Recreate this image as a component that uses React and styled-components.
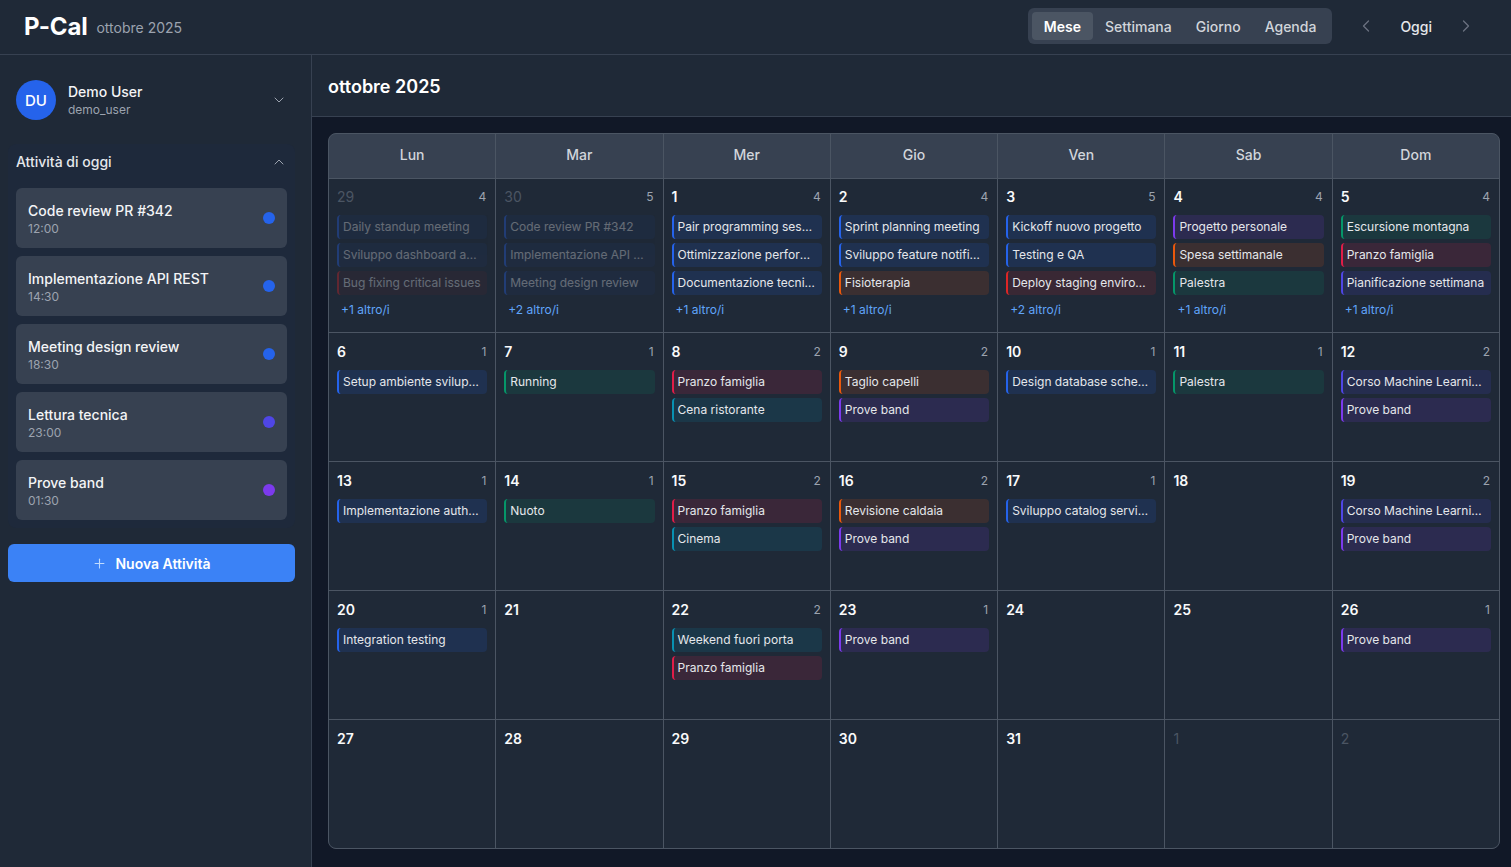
import React from "react";
import styled, { createGlobalStyle } from "styled-components";
import { ChevronDown, ChevronUp, ChevronLeft, ChevronRight, Plus } from "lucide-react";

const GlobalStyle = createGlobalStyle`
  * { box-sizing: border-box; }
  html, body { margin: 0; padding: 0; }
  body {
    font-family: Inter, "Noto Sans", sans-serif;
    background: #111827;
    color: #f3f4f6;
  }
`;

const COLORS = {
  blue: "#2563eb",
  red: "#dc2626",
  orange: "#ea580c",
  green: "#059669",
  purple: "#7c3aed",
  rose: "#e11d48",
  cyan: "#0891b2",
  indigo: "#4f46e5",
};

const Page = styled.div`
  width: 1511px;
  height: 867px;
  display: flex;
  flex-direction: column;
  overflow: hidden;
`;

const TopBar = styled.header`
  height: 55px;
  flex-shrink: 0;
  display: flex;
  align-items: center;
  justify-content: space-between;
  padding: 0 29px 2px 24px;
  background: #1f2937;
  border-bottom: 1px solid #374151;
`;

const Brand = styled.div`
  display: flex;
  align-items: center;
  gap: 9px;
`;

const Logo = styled.span`
  font-size: 24px;
  font-weight: 700;
  color: #ffffff;
  letter-spacing: -0.2px;
`;

const BrandSub = styled.span`
  font-size: 14px;
  color: #9ca3af;
  padding-top: 2px;
`;

const TopRight = styled.div`
  display: flex;
  align-items: center;
`;

const ViewSwitch = styled.div`
  display: flex;
  padding: 4px;
  background: #374151;
  border-radius: 6px;
  margin-right: 18px;
`;

const ViewButton = styled.button`
  border: none;
  font-family: inherit;
  font-size: 14px;
  font-weight: ${(p) => (p.$active ? 600 : 500)};
  color: ${(p) => (p.$active ? "#ffffff" : "#d1d5db")};
  background: ${(p) => (p.$active ? "#4b5563" : "transparent")};
  border-radius: 4px;
  height: 28px;
  padding: 0 12px;
`;

const NavButton = styled.button`
  border: none;
  background: transparent;
  color: #6b7280;
  display: flex;
  align-items: center;
  justify-content: center;
  width: 32px;
  height: 28px;
  padding: 0;
`;

const TodayButton = styled.button`
  border: none;
  background: transparent;
  font-family: inherit;
  font-size: 14px;
  font-weight: 500;
  color: #e5e7eb;
  padding: 0 18px;
`;

const Body = styled.div`
  flex: 1;
  display: flex;
  min-height: 0;
`;

const Sidebar = styled.aside`
  width: 312px;
  flex-shrink: 0;
  background: #1f2937;
  border-right: 1px solid #374151;
  padding: 0 16px 0 8px;
  display: flex;
  flex-direction: column;
`;

const UserBlock = styled.div`
  display: flex;
  align-items: center;
  padding: 25px 8px 16px;
  gap: 12px;
`;

const Avatar = styled.div`
  width: 40px;
  height: 40px;
  border-radius: 50%;
  background: #2563eb;
  color: #ffffff;
  font-size: 15px;
  font-weight: 500;
  display: flex;
  align-items: center;
  justify-content: center;
`;

const UserInfo = styled.div`
  flex: 1;
  display: flex;
  flex-direction: column;
`;

const UserName = styled.span`
  font-size: 14px;
  font-weight: 500;
  line-height: 20px;
  color: #f3f4f6;
`;

const UserHandle = styled.span`
  font-size: 12px;
  line-height: 16px;
  color: #9ca3af;
`;

const IconWrap = styled.span`
  display: flex;
  color: #9ca3af;
`;

const TodayPanel = styled.section`
  margin-top: 8px;
  background: #1e293b;
  border-radius: 8px;
  padding: 0 8px 8px;
`;

const PanelHeader = styled.div`
  display: flex;
  align-items: center;
  justify-content: space-between;
  height: 36px;
  margin: 0 0 8px;
  padding: 0 0 1px 0;
`;

const PanelTitle = styled.span`
  font-size: 14px;
  font-weight: 500;
  color: #e5e7eb;
`;

const TaskList = styled.div`
  display: flex;
  flex-direction: column;
  gap: 8px;
`;

const TaskCard = styled.div`
  height: 60px;
  background: #374151;
  border-radius: 6px;
  padding: 0 12px;
  display: flex;
  align-items: center;
  justify-content: space-between;
`;

const TaskText = styled.div`
  display: flex;
  flex-direction: column;
  padding-top: 1px;
`;

const TaskTitle = styled.span`
  font-size: 14px;
  font-weight: 500;
  line-height: 20px;
  color: #f3f4f6;
`;

const TaskTime = styled.span`
  font-size: 12px;
  line-height: 16px;
  color: #9ca3af;
`;

const Dot = styled.span`
  width: 12px;
  height: 12px;
  border-radius: 50%;
  background: ${(p) => p.$color};
`;

const NewButton = styled.button`
  margin-top: 16px;
  height: 38px;
  border: none;
  border-radius: 6px;
  background: #3b82f6;
  color: #ffffff;
  font-family: inherit;
  font-size: 14px;
  font-weight: 600;
  display: flex;
  align-items: center;
  justify-content: center;
  gap: 8px;
  padding-bottom: 1px;
`;

const Main = styled.main`
  flex: 1;
  display: flex;
  flex-direction: column;
  min-width: 0;
`;

const MainHeader = styled.div`
  height: 62px;
  flex-shrink: 0;
  display: flex;
  align-items: center;
  padding: 2px 16px 0;
  background: #1f2937;
  border-bottom: 1px solid #374151;
`;

const MainTitle = styled.h2`
  margin: 0;
  font-size: 18px;
  font-weight: 600;
  color: #ffffff;
`;

const CalendarArea = styled.div`
  flex: 1;
  padding: 16px 11px 18px 16px;
  background: #111827;
  min-height: 0;
`;

const Calendar = styled.div`
  display: grid;
  grid-template-columns: repeat(7, 1fr);
  grid-template-rows: 44px repeat(5, auto);
  gap: 1px;
  background: #4b5563;
  border: 1px solid #4b5563;
  border-radius: 8px;
  overflow: hidden;
  height: 100%;
`;

const DayHead = styled.div`
  background: #374151;
  display: flex;
  align-items: center;
  justify-content: center;
  padding-bottom: 3px;
  font-size: 14px;
  font-weight: 500;
  color: #d1d5db;
`;

const Cell = styled.div`
  background: #1f2937;
  padding: 8px;
  min-height: 128px;
  min-width: 0;
  display: flex;
  flex-direction: column;
`;

const CellTop = styled.div`
  display: flex;
  align-items: center;
  justify-content: space-between;
  height: 20px;
  margin-bottom: 9px;
`;

const DayNum = styled.span`
  font-size: 14px;
  color: ${(p) => (p.$out ? "#4b5563" : "#f9fafb")};
  font-weight: ${(p) => (p.$out ? 400 : 600)};
`;

const Count = styled.span`
  font-size: 12px;
  color: #9ca3af;
  padding-right: 1px;
`;

const Events = styled.div`
  display: flex;
  flex-direction: column;
  gap: 4px;
  opacity: ${(p) => (p.$out ? 0.35 : 1)};
`;

const Event = styled.div`
  height: 24px;
  line-height: 24px;
  border-left: 2px solid ${(p) => p.$color};
  background: ${(p) => p.$color}24;
  border-radius: 4px;
  padding: 0 6px 0 4px;
  font-size: 12px;
  color: #e5e7eb;
  white-space: nowrap;
  overflow: hidden;
  text-overflow: ellipsis;
`;

const More = styled.span`
  margin-top: 3px;
  padding: 4px 4px 6px;
  font-size: 12px;
  line-height: 16px;
  color: #60a5fa;
`;

const DAYS = ["Lun", "Mar", "Mer", "Gio", "Ven", "Sab", "Dom"];

const ev = (color, title) => ({ color: COLORS[color], title });

const WEEKS = [
  [
    { d: 29, out: true, n: 4, more: 1, e: [ev("blue", "Daily standup meeting"), ev("blue", "Sviluppo dashboard analytics"), ev("red", "Bug fixing critical issues")] },
    { d: 30, out: true, n: 5, more: 2, e: [ev("blue", "Code review PR #342"), ev("blue", "Implementazione API REST"), ev("blue", "Meeting design review")] },
    { d: 1, n: 4, more: 1, e: [ev("blue", "Pair programming session"), ev("blue", "Ottimizzazione performance"), ev("blue", "Documentazione tecnica")] },
    { d: 2, n: 4, more: 1, e: [ev("blue", "Sprint planning meeting"), ev("blue", "Sviluppo feature notifiche"), ev("orange", "Fisioterapia")] },
    { d: 3, n: 5, more: 2, e: [ev("blue", "Kickoff nuovo progetto"), ev("blue", "Testing e QA"), ev("red", "Deploy staging environment")] },
    { d: 4, n: 4, more: 1, e: [ev("purple", "Progetto personale"), ev("orange", "Spesa settimanale"), ev("green", "Palestra")] },
    { d: 5, n: 4, more: 1, e: [ev("green", "Escursione montagna"), ev("rose", "Pranzo famiglia"), ev("indigo", "Pianificazione settimana")] },
  ],
  [
    { d: 6, n: 1, e: [ev("blue", "Setup ambiente sviluppo")] },
    { d: 7, n: 1, e: [ev("green", "Running")] },
    { d: 8, n: 2, e: [ev("rose", "Pranzo famiglia"), ev("cyan", "Cena ristorante")] },
    { d: 9, n: 2, e: [ev("orange", "Taglio capelli"), ev("purple", "Prove band")] },
    { d: 10, n: 1, e: [ev("blue", "Design database schema")] },
    { d: 11, n: 1, e: [ev("green", "Palestra")] },
    { d: 12, n: 2, e: [ev("indigo", "Corso Machine Learning"), ev("purple", "Prove band")] },
  ],
  [
    { d: 13, n: 1, e: [ev("blue", "Implementazione authentication")] },
    { d: 14, n: 1, e: [ev("green", "Nuoto")] },
    { d: 15, n: 2, e: [ev("rose", "Pranzo famiglia"), ev("cyan", "Cinema")] },
    { d: 16, n: 2, e: [ev("orange", "Revisione caldaia"), ev("purple", "Prove band")] },
    { d: 17, n: 1, e: [ev("blue", "Sviluppo catalog service")] },
    { d: 18, e: [] },
    { d: 19, n: 2, e: [ev("indigo", "Corso Machine Learning"), ev("purple", "Prove band")] },
  ],
  [
    { d: 20, n: 1, e: [ev("blue", "Integration testing")] },
    { d: 21, e: [] },
    { d: 22, n: 2, e: [ev("cyan", "Weekend fuori porta"), ev("rose", "Pranzo famiglia")] },
    { d: 23, n: 1, e: [ev("purple", "Prove band")] },
    { d: 24, e: [] },
    { d: 25, e: [] },
    { d: 26, n: 1, e: [ev("purple", "Prove band")] },
  ],
  [
    { d: 27, e: [] },
    { d: 28, e: [] },
    { d: 29, e: [] },
    { d: 30, e: [] },
    { d: 31, e: [] },
    { d: 1, out: true, e: [] },
    { d: 2, out: true, e: [] },
  ],
];

const TASKS = [
  { title: "Code review PR #342", time: "12:00", color: "#2563eb" },
  { title: "Implementazione API REST", time: "14:30", color: "#2563eb" },
  { title: "Meeting design review", time: "18:30", color: "#2563eb" },
  { title: "Lettura tecnica", time: "23:00", color: "#4f46e5" },
  { title: "Prove band", time: "01:30", color: "#7c3aed" },
];

const VIEWS = ["Mese", "Settimana", "Giorno", "Agenda"];

const App = () => {
  return (
    <Page>
      <GlobalStyle />
      <TopBar>
        <Brand>
          <Logo>P-Cal</Logo>
          <BrandSub>ottobre 2025</BrandSub>
        </Brand>
        <TopRight>
          <ViewSwitch>
            {VIEWS.map((v) => (
              <ViewButton key={v} $active={v === "Mese"}>
                {v}
              </ViewButton>
            ))}
          </ViewSwitch>
          <NavButton>
            <ChevronLeft size={20} strokeWidth={1.5} />
          </NavButton>
          <TodayButton>Oggi</TodayButton>
          <NavButton>
            <ChevronRight size={20} strokeWidth={1.5} />
          </NavButton>
        </TopRight>
      </TopBar>

      <Body>
        <Sidebar>
          <UserBlock>
            <Avatar>DU</Avatar>
            <UserInfo>
              <UserName>Demo User</UserName>
              <UserHandle>demo_user</UserHandle>
            </UserInfo>
            <IconWrap>
              <ChevronDown size={16} strokeWidth={1.5} />
            </IconWrap>
          </UserBlock>

          <TodayPanel>
            <PanelHeader>
              <PanelTitle>Attività di oggi</PanelTitle>
              <IconWrap>
                <ChevronUp size={16} strokeWidth={1.5} />
              </IconWrap>
            </PanelHeader>
            <TaskList>
              {TASKS.map((t) => (
                <TaskCard key={t.title}>
                  <TaskText>
                    <TaskTitle>{t.title}</TaskTitle>
                    <TaskTime>{t.time}</TaskTime>
                  </TaskText>
                  <Dot $color={t.color} />
                </TaskCard>
              ))}
            </TaskList>
          </TodayPanel>

          <NewButton>
            <Plus size={15} strokeWidth={1.75} color="#bfdbfe" />
            Nuova Attività
          </NewButton>
        </Sidebar>

        <Main>
          <MainHeader>
            <MainTitle>ottobre 2025</MainTitle>
          </MainHeader>
          <CalendarArea>
            <Calendar>
              {DAYS.map((d) => (
                <DayHead key={d}>{d}</DayHead>
              ))}
              {WEEKS.flat().map((c, i) => (
                <Cell key={i}>
                  <CellTop>
                    <DayNum $out={c.out}>{c.d}</DayNum>
                    {c.n ? <Count>{c.n}</Count> : null}
                  </CellTop>
                  <Events $out={c.out}>
                    {c.e.map((e, j) => (
                      <Event key={j} $color={e.color}>
                        {e.title}
                      </Event>
                    ))}
                  </Events>
                  {c.more ? <More>+{c.more} altro/i</More> : null}
                </Cell>
              ))}
            </Calendar>
          </CalendarArea>
        </Main>
      </Body>
    </Page>
  );
};

export default App;
